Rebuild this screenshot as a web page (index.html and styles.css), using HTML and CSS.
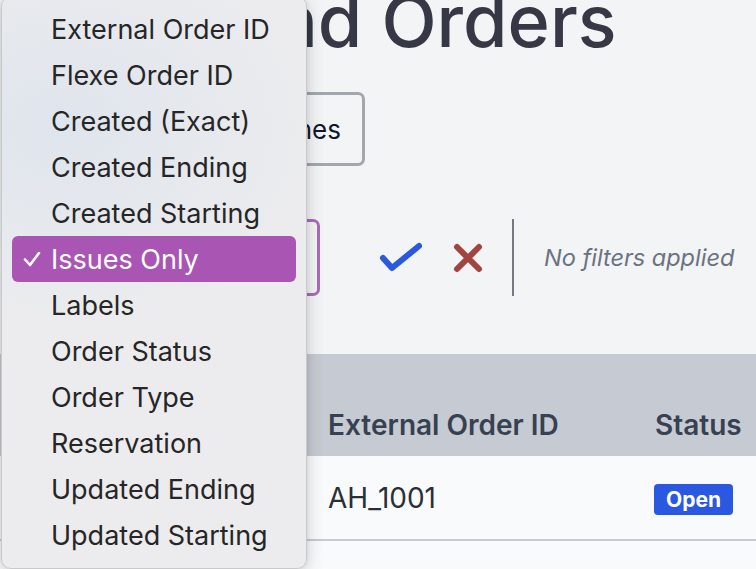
FILE: index.html
```html
<!DOCTYPE html>
<html>
<head>
    <title>Outbound Orders</title>
    <link rel="stylesheet" href="styles.css">
</head>
<body>
    <div class="page">
        <h1 class="title">Outbound Orders</h1>

        <div class="actions">
            <button class="btn">Upload Lines</button>
        </div>

        <div class="filters">
            <div class="select">
                <span class="select-value">Issues Only</span>
                <span class="select-arrow"></span>
            </div>
            <button class="icon-btn" title="Apply">
                <svg width="44" height="32" viewBox="0 0 44 32">
                    <path d="M4 16 L13 26 L40 4" fill="none" stroke="#2b58e0" stroke-width="6" stroke-linecap="round" stroke-linejoin="round"/>
                </svg>
            </button>
            <button class="icon-btn" title="Clear">
                <svg width="32" height="32" viewBox="0 0 32 32">
                    <path d="M5 5 L27 27 M27 5 L5 27" fill="none" stroke="#a2453f" stroke-width="6" stroke-linecap="round"/>
                </svg>
            </button>
            <div class="divider"></div>
            <span class="filter-note">No filters applied</span>
        </div>

        <table class="orders">
            <colgroup>
                <col class="col-select">
                <col class="col-id">
                <col class="col-status">
            </colgroup>
            <thead>
                <tr>
                    <th></th>
                    <th>External Order ID</th>
                    <th>Status</th>
                </tr>
            </thead>
            <tbody>
                <tr>
                    <td></td>
                    <td>AH_1001</td>
                    <td><span class="badge">Open</span></td>
                </tr>
                <tr>
                    <td></td>
                    <td>AH_1002</td>
                    <td><span class="badge">Open</span></td>
                </tr>
            </tbody>
        </table>
    </div>

    <!-- open dropdown of the filter select -->
    <ul class="menu">
        <li class="menu-item"><span class="tick"></span>External Order ID</li>
        <li class="menu-item"><span class="tick"></span>Flexe Order ID</li>
        <li class="menu-item"><span class="tick"></span>Created (Exact)</li>
        <li class="menu-item"><span class="tick"></span>Created Ending</li>
        <li class="menu-item"><span class="tick"></span>Created Starting</li>
        <li class="menu-item selected">
            <span class="tick">
                <svg width="18" height="16" viewBox="0 0 18 16">
                    <path d="M2 8.5 L7 14 L16 2" fill="none" stroke="#fff" stroke-width="2.6" stroke-linecap="round" stroke-linejoin="round"/>
                </svg>
            </span>Issues Only
        </li>
        <li class="menu-item"><span class="tick"></span>Labels</li>
        <li class="menu-item"><span class="tick"></span>Order Status</li>
        <li class="menu-item"><span class="tick"></span>Order Type</li>
        <li class="menu-item"><span class="tick"></span>Reservation</li>
        <li class="menu-item"><span class="tick"></span>Updated Ending</li>
        <li class="menu-item"><span class="tick"></span>Updated Starting</li>
    </ul>
</body>
</html>
```

FILE: styles.css
```css
body {
    margin: 0;
    background: #f3f4f6;
    font-family: Inter, "Liberation Sans", sans-serif;
    color: #1f2937;
    overflow: hidden;
}
.page {
    padding-left: 20px;
}
.title {
    margin: -15px 0 0;
    font-size: 72px;
    line-height: 72px;
    font-weight: 500;
    color: #363845;
    white-space: nowrap;
}
.actions {
    margin-top: 35px;
    display: flex;
}
.btn {
    margin-left: 145px;
    width: 200px;
    height: 74px;
    padding: 0 21px 0 10px;
    border: 3px solid #a1a6af;
    border-radius: 7px;
    background: #f3f4f6;
    font-family: inherit;
    font-size: 26px;
    color: #111827;
    text-align: right;
    white-space: nowrap;
}
.filters {
    margin-top: 53px;
    display: flex;
    align-items: center;
    height: 77px;
}
.select {
    width: 300px;
    height: 77px;
    box-sizing: border-box;
    border: 3px solid #a96cb6;
    border-radius: 7px;
    display: flex;
    align-items: center;
    justify-content: space-between;
    padding: 0 10px 0 20px;
    font-size: 22px;
}
.select-arrow {
    width: 3px;
    height: 2px;
    background: #555;
}
.icon-btn {
    border: none;
    background: none;
    padding: 0;
    display: flex;
}
.icon-btn:first-of-type {
    margin-left: 59px;
}
.icon-btn + .icon-btn {
    margin-left: 29px;
}
.divider {
    margin-left: 28px;
    width: 2px;
    height: 77px;
    background: #737884;
}
.filter-note {
    margin-left: 30px;
    font-size: 23.5px;
    font-style: italic;
    color: #6b7280;
    white-space: nowrap;
}
.orders {
    margin: 58px 0 0 -20px;
    border-collapse: collapse;
    table-layout: fixed;
    width: 776px;
}
.col-select {
    width: 304px;
}
.col-id {
    width: 327px;
}
.col-status {
    width: 145px;
}
.orders th {
    background: #c6cad2;
    text-align: left;
    font-size: 28px;
    font-weight: 600;
    color: #374151;
    padding: 54px 24px 14px;
    height: 102px;
    box-sizing: border-box;
    white-space: nowrap;
}
.orders td {
    background: #f9fafb;
    border-bottom: 2px solid #c6cad2;
    padding: 0 24px;
    height: 83px;
    font-size: 28px;
    color: #2b2f38;
}
.badge {
    display: inline-block;
    background: #2b58e0;
    color: #fff;
    font-weight: 700;
    font-size: 21px;
    line-height: 31px;
    padding: 0 12px;
    border-radius: 4px;
    margin-left: -1px;
}

/* dropdown overlay */
.menu {
    position: absolute;
    left: 1px;
    top: -4px;
    width: 306px;
    height: 573px;
    box-sizing: border-box;
    margin: 0;
    padding: 9px 0 0;
    list-style: none;
    border: 1px solid #c9c9cc;
    border-radius: 10px;
    background: radial-gradient(ellipse 260px 200px at 60px 130px, #dfe5ed 0%, #ececee 100%);
    box-shadow: 0 4px 18px rgba(0, 0, 0, 0.18), 0 0 4px rgba(0, 0, 0, 0.08);
}
.menu-item {
    margin: 0 10px;
    height: 46px;
    padding-left: 11px;
    display: flex;
    align-items: center;
    font-size: 27px;
    color: #262626;
    border-radius: 6px;
    white-space: nowrap;
}
.tick {
    width: 28px;
    flex-shrink: 0;
    display: flex;
    align-items: center;
}
.menu-item.selected {
    background: #a855b4;
    color: #fff;
}
```
